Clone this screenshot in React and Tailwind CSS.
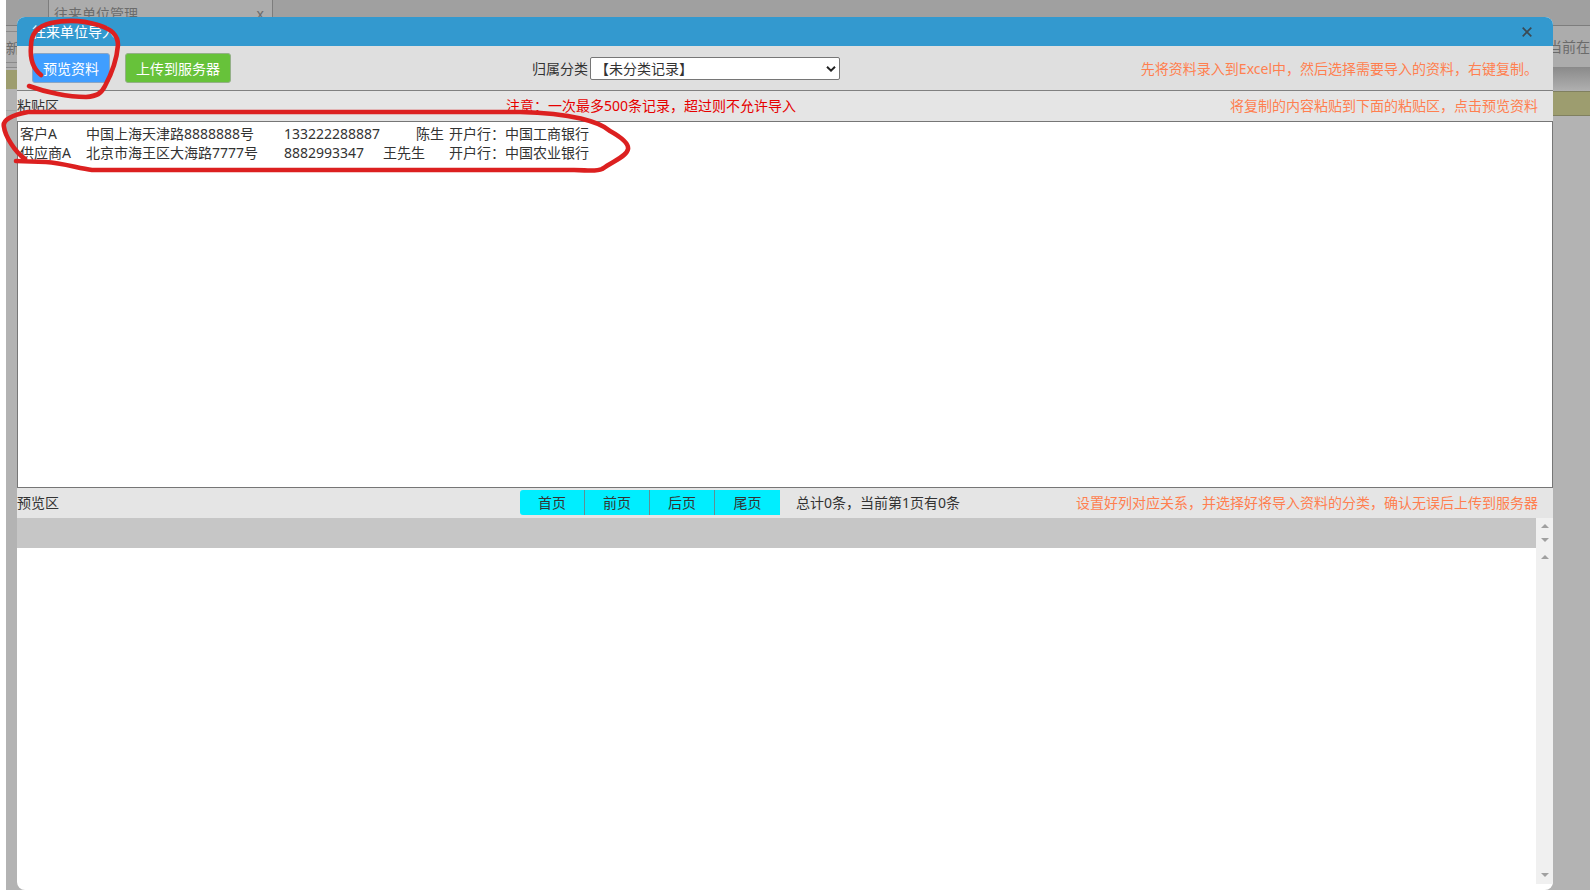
import React from "react";

const pages = ["首页", "前页", "后页", "尾页"];

const pasted =
  "客户A\t中国上海天津路8888888号\t133222288887\t\t陈生\t开户行：中国工商银行\n" +
  "供应商A\t北京市海王区大海路7777号\t8882993347\t王先生\t开户行：中国农业银行";

function Arrow({ down }) {
  return (
    <svg viewBox="0 0 8 4" className={down ? "h-1 w-2 rotate-180" : "h-1 w-2"} aria-hidden="true">
      <path d="M4 0 L8 4 H0 Z" fill="#a0a0a0" />
    </svg>
  );
}

function Backdrop() {
  return (
    <div className="absolute inset-y-0 right-0 left-[6px] overflow-hidden bg-[#b3b3b3] text-[#6b6b6b]">
      <div className="flex h-[26px] border-b border-[#7d7d7d] bg-[#a0a0a0] pl-[42px]">
        <div className="flex h-[26px] w-[225px] items-center justify-between border-x border-[#7d7d7d] bg-[#acacac] pr-2 pl-[5px]">
          <span>往来单位管理</span>
          <span>x</span>
        </div>
      </div>
      <div className="flex h-[42px] items-stretch justify-between border-b border-[#8a8a8a] bg-[#acacac]">
        <div className="flex w-1/2 flex-col pt-[5px] pb-1">
          <div className="flex flex-1 items-center border-y border-[#8a8a8a]">新</div>
        </div>
        <span className="self-center">当前在</span>
      </div>
      <div className="flex justify-between">
        <div className="w-1/2 pt-[2px]">
          <div className="h-[19px] bg-[#9d9d6f]" />
          <div className="h-[22px] border-b border-[#a3a3a3]" />
        </div>
        <div className="w-1/2">
          <div className="h-[23px] bg-linear-to-b from-[#8c8c8c] to-[#b0b0b0]" />
          <div className="h-[25px] border-y border-[#80805f] bg-[#9d9d6f]" />
        </div>
      </div>
    </div>
  );
}

function Marks() {
  return (
    <svg className="pointer-events-none absolute top-0 left-0 h-[180px] w-[640px]" viewBox="0 0 640 180" fill="none" stroke="#dc2020" strokeWidth="4.6" strokeLinecap="round" strokeLinejoin="round" aria-hidden="true">
      <path d="M41 75 C32 68 30 57 31 46 C31 33 38 26 51 23 C65 20 82 20 98 25 C112 29 118 35 118 45 C117 57 112 73 105 86 C101 94 97 96 86 97 C68 97 45 92 29 86" />
      <path d="M25 159 C15 152 5 136 4 127 C2 120 12 115 28 112 L520 112 C572 113 600 122 610 131 C619 136 629 143 628 149 C627 156 615 160 602 169 C596 172 586 170 574 170 L92 170 C78 168 62 163 46 162 L16 161" />
    </svg>
  );
}

export default function App() {
  return (
    <div className="relative flex h-screen flex-col overflow-hidden bg-white pt-[17px] pr-[37px] pl-[17px] font-['Noto_Sans','Noto_Sans_CJK_SC',sans-serif] text-[14px] leading-[19px] text-[#333333]">
      <Backdrop />
      <main className="relative flex min-h-0 flex-1 flex-col overflow-hidden rounded-lg bg-white">
        <header className="flex h-[29px] shrink-0 items-center justify-between bg-[#3399cf] pr-[18px] pl-[15px]">
          <h1 className="text-white">往来单位导入</h1>
          <button type="button" aria-label="关闭" className="flex size-4 items-center justify-center">
            <svg viewBox="0 0 10 10" className="size-[10px]" stroke="#3b4a54" strokeWidth="1.7" aria-hidden="true">
              <path d="M0.7 0.7 L9.3 9.3 M9.3 0.7 L0.7 9.3" />
            </svg>
          </button>
        </header>

        <div className="grid h-[45px] shrink-0 grid-cols-3 items-center border-b border-[#808080] bg-[#dfdfdf]">
          <div className="flex gap-[15px] pl-[15px]">
            <button type="button" className="h-[30px] rounded-[3px] border border-[#8aa5c4] bg-[#409eff] px-[10px] text-white">预览资料</button>
            <button type="button" className="h-[30px] rounded-[3px] border border-[#94b088] bg-[#67c23a] px-[10px] text-white">上传到服务器</button>
          </div>
          <div className="flex items-center gap-[2px]">
            <label htmlFor="category" className="pl-[3px] whitespace-nowrap">归属分类</label>
            <div className="relative w-[250px]">
              <select id="category" className="block h-[23px] w-full appearance-none rounded-[2px] border border-[#767676] bg-white pl-1">
                <option>【未分类记录】</option>
              </select>
              <svg viewBox="0 0 10 6" className="pointer-events-none absolute top-[9px] right-[4px] h-[6px] w-[10px]" fill="none" stroke="#222222" strokeWidth="2" aria-hidden="true">
                <path d="M1 0.8 L5 4.6 L9 0.8" />
              </svg>
            </div>
          </div>
          <p className="pr-[15px] text-right whitespace-nowrap text-[#ff7f50]">先将资料录入到Excel中，然后选择需要导入的资料，右键复制。</p>
        </div>

        <div className="grid h-[30px] shrink-0 grid-cols-[489px_1fr_auto] items-center bg-[#e5e5e5] pb-[2px]">
          <label htmlFor="paste">粘贴区</label>
          <p className="text-[#e60000]">注意：一次最多500条记录，超过则不允许导入</p>
          <p className="pr-[15px] text-[#ff7f50]">将复制的内容粘贴到下面的粘贴区，点击预览资料</p>
        </div>

        <textarea id="paste" defaultValue={pasted} spellCheck={false} className="block h-[367px] w-full shrink-0 resize-none border border-[#767676] bg-white p-[2px] [tab-size:33px]" />

        <div className="flex h-[30px] shrink-0 items-center bg-[#e5e5e5] pb-[2px]">
          <h2 className="w-[503px]">预览区</h2>
          <nav className="flex h-[25px] overflow-hidden rounded-l-[3px]">
            {pages.map((p) => (
              <button key={p} type="button" className="w-[65px] border-r border-[#5f8f94] bg-[#00eeff] last:border-r-0">{p}</button>
            ))}
          </nav>
          <p className="pl-4">总计0条，当前第1页有0条</p>
          <p className="ml-auto pr-[15px] text-[#ff7f50]">设置好列对应关系，并选择好将导入资料的分类，确认无误后上传到服务器</p>
        </div>

        <div className="flex h-[30px] shrink-0 bg-[#c6c6c6]">
          <div className="ml-auto flex w-[17px] flex-col items-center justify-between bg-[#f0f0f0] pt-[6px] pb-[6px]">
            <Arrow />
            <Arrow down />
          </div>
        </div>
        <div className="flex min-h-0 flex-1 pb-[6px]">
          <div className="ml-auto flex w-[17px] flex-col items-center justify-between bg-[#f0f0f0] pt-[7px] pb-[7px]">
            <Arrow />
            <Arrow down />
          </div>
        </div>
      </main>
      <Marks />
    </div>
  );
}
